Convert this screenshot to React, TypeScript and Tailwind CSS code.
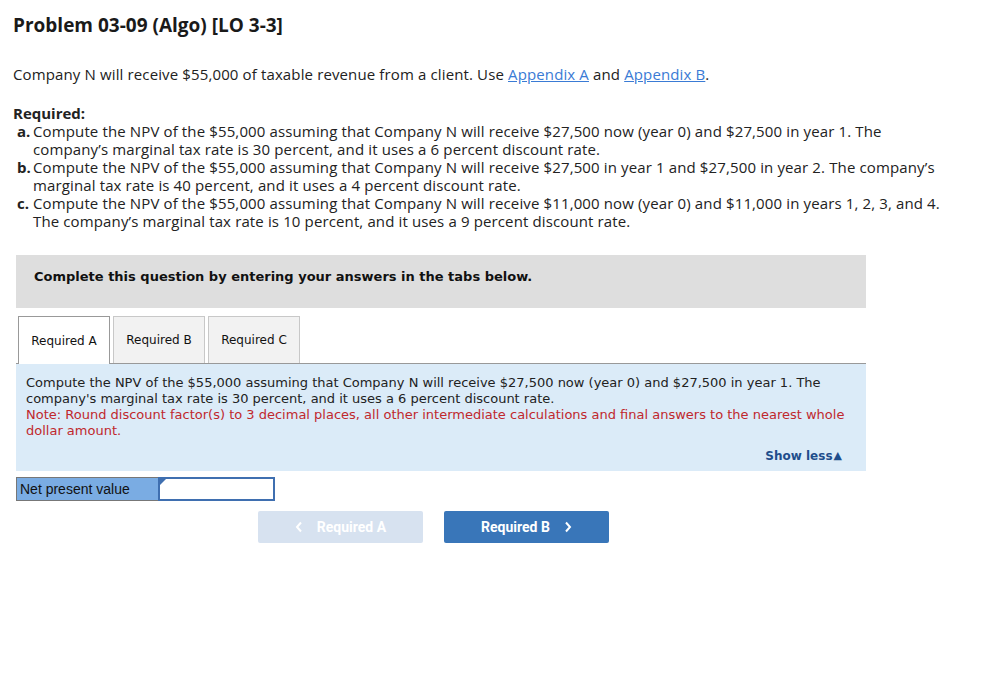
import React from 'react';

const body = { fontFamily: '"Open Sans", Lato, sans-serif' };
const verdana = { fontFamily: '"DejaVu Sans", Verdana, sans-serif' };

const parts = [
  {
    key: 'a',
    text: 'Compute the NPV of the $55,000 assuming that Company N will receive $27,500 now (year 0) and $27,500 in year 1. The company’s marginal tax rate is 30 percent, and it uses a 6 percent discount rate.',
  },
  {
    key: 'b',
    text: 'Compute the NPV of the $55,000 assuming that Company N will receive $27,500 in year 1 and $27,500 in year 2. The company’s marginal tax rate is 40 percent, and it uses a 4 percent discount rate.',
  },
  {
    key: 'c',
    text: 'Compute the NPV of the $55,000 assuming that Company N will receive $11,000 now (year 0) and $11,000 in years 1, 2, 3, and 4. The company’s marginal tax rate is 10 percent, and it uses a 9 percent discount rate.',
  },
];

const tabs = ['Required A', 'Required B', 'Required C'];

export default function App() {
  return (
    <div className="w-[984px] h-[688px] bg-white text-[#222]" style={body}>
      <div className="pl-[13px]">
        <h1 className="pt-[13px] text-[19px] leading-[24px] font-bold text-[#1a1a1a]">Problem 03-09 (Algo) [LO 3-3]</h1>

        <p className="mt-[28px] text-[15px] leading-[18px] tracking-[0.13px]">
          Company N will receive $55,000 of taxable revenue from a client. Use{' '}
          <span className="text-[#3a7bd5] underline">Appendix A</span> and{' '}
          <span className="text-[#3a7bd5] underline">Appendix B</span>.
        </p>

        <p className="mt-[21px] text-[15px] leading-[18px] font-bold">Required:</p>
        <div className="w-[932px] tracking-[0.13px]">
          {parts.map((p) => (
            <div key={p.key} className="flex text-[15px] leading-[18px]">
              <span className="w-[20px] shrink-0 pl-[4px] font-bold tracking-normal">{p.key}.</span>
              <span className="flex-1">{p.text}</span>
            </div>
          ))}
        </div>
      </div>

      <div className="ml-[16px] w-[850px]">
        <div
          className="mt-[25px] h-[53px] bg-[#dedede] pt-[14px] pl-[18px] text-[13px] leading-[16px] font-bold text-[#111]"
          style={verdana}
        >
          Complete this question by entering your answers in the tabs below.
        </div>

        <div className="mt-[8px] flex items-end border-b border-[#999] h-[48px] pl-[2px] gap-[3px]">
          {tabs.map((t, i) => (
            <div
              key={t}
              className={
                i === 0
                  ? 'w-[92px] h-[48px] -mb-px bg-white border border-b-0 border-[#999] flex items-center justify-center text-[12px] text-[#111]'
                  : 'w-[92px] h-[47px] bg-[#f2f2f2] border border-b-0 border-[#c8c8c8] flex items-center justify-center text-[12px] text-[#111]'
              }
              style={verdana}
            >
              {t}
            </div>
          ))}
        </div>

        <div className="bg-[#dbebf8] h-[107px] px-[10px] pt-[11px] relative" style={verdana}>
          <p className="text-[13px] leading-[16px] text-[#222]">
            Compute the NPV of the $55,000 assuming that Company N will receive $27,500 now (year 0) and $27,500 in year 1. The company's marginal tax rate is 30 percent, and it uses a 6 percent discount rate.
          </p>
          <p className="text-[13px] leading-[16px] text-[#c0282d]">
            Note: Round discount factor(s) to 3 decimal places, all other intermediate calculations and final answers to the nearest whole dollar amount.
          </p>
          <div className="absolute right-[24px] bottom-[7px] text-[12px] leading-[16px] font-bold text-[#1f4e8c] flex items-center">
            Show less<span className="text-[11px] ml-[1px]">▲</span>
          </div>
        </div>

        <div className="mt-[6px] flex h-[24px]" style={{ fontFamily: '"Liberation Sans", Arial, sans-serif' }}>
          <div className="w-[142px] bg-[#7aace3] border border-[#777] border-r-0 flex items-center pl-[3px] text-[14px] text-[#111]">
            Net present value
          </div>
          <div className="w-[117px] bg-white border-2 border-[#3f6fb0] relative">
            <span className="absolute left-0 top-0 w-0 h-0 border-t-[6px] border-t-[#3f6fb0] border-r-[6px] border-r-transparent"></span>
          </div>
        </div>

        <div className="mt-[10px] flex gap-[21px] pl-[242px]" style={{ fontFamily: 'Roboto, sans-serif' }}>
          <button className="w-[165px] h-[32px] rounded-[2px] bg-[#d7e2f0] text-white text-[14px] font-bold flex items-center justify-center gap-[14px]">
            <svg width="8" height="12" viewBox="0 0 8 12"><path d="M6 1.5L2 6l4 4.5" stroke="white" strokeWidth="2" fill="none" /></svg>
            Required A
          </button>
          <button className="w-[165px] h-[32px] rounded-[2px] bg-[#3976b9] text-white text-[14px] font-bold flex items-center justify-center gap-[14px]">
            Required B
            <svg width="8" height="12" viewBox="0 0 8 12"><path d="M2 1.5L6 6l-4 4.5" stroke="white" strokeWidth="2" fill="none" /></svg>
          </button>
        </div>
      </div>
    </div>
  );
}
